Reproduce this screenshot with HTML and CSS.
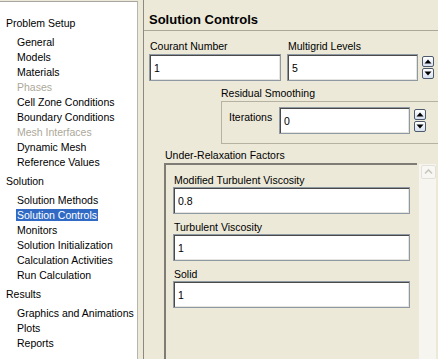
FILE: index.html
```html
<!DOCTYPE html>
<html>
<head>
<meta charset="utf-8">
<link rel="stylesheet" href="styles.css">
</head>
<body>
<div class="app">
  <nav class="nav">
    <div class="head">Problem Setup</div>
    <div class="item">General</div>
    <div class="item">Models</div>
    <div class="item">Materials</div>
    <div class="item off">Phases</div>
    <div class="item">Cell Zone Conditions</div>
    <div class="item">Boundary Conditions</div>
    <div class="item off">Mesh Interfaces</div>
    <div class="item">Dynamic Mesh</div>
    <div class="item">Reference Values</div>
    <div class="head">Solution</div>
    <div class="item">Solution Methods</div>
    <div class="item"><span class="sel">Solution Controls</span></div>
    <div class="item">Monitors</div>
    <div class="item">Solution Initialization</div>
    <div class="item">Calculation Activities</div>
    <div class="item">Run Calculation</div>
    <div class="head">Results</div>
    <div class="item">Graphics and Animations</div>
    <div class="item">Plots</div>
    <div class="item">Reports</div>
  </nav>
  <div class="splitter"></div>
  <main class="main">
    <div class="title">Solution Controls</div>
    <div class="toprow">
      <div class="field-group courant">
        <div class="label">Courant Number</div>
        <input class="field w132" type="text" value="1">
      </div>
      <div class="field-group multigrid">
        <div class="label">Multigrid Levels</div>
        <div class="spinrow">
          <input class="field w131" type="text" value="5">
          <div class="spinner">
            <div class="spin-btn"><svg width="12" height="11" viewBox="0 0 12 11"><path d="M2.5 7.5 L6 3.5 L9.5 7.5 Z" fill="#000"/></svg></div>
            <div class="spin-btn"><svg width="12" height="11" viewBox="0 0 12 11"><path d="M2.5 3.5 L6 7.5 L9.5 3.5 Z" fill="#000"/></svg></div>
          </div>
        </div>
      </div>
    </div>
    <div class="residual">
      <div class="group-label">Residual Smoothing</div>
      <div class="rbox">
        <div class="iter-label">Iterations</div>
        <input class="field w131" type="text" value="0">
        <div class="spinner">
          <div class="spin-btn"><svg width="12" height="11" viewBox="0 0 12 11"><path d="M2.5 7.5 L6 3.5 L9.5 7.5 Z" fill="#000"/></svg></div>
          <div class="spin-btn"><svg width="12" height="11" viewBox="0 0 12 11"><path d="M2.5 3.5 L6 7.5 L9.5 3.5 Z" fill="#000"/></svg></div>
        </div>
      </div>
    </div>
    <div class="urf-label">Under-Relaxation Factors</div>
    <div class="urf">
      <div class="viewport">
        <div class="vlabel">Modified Turbulent Viscosity</div>
        <input class="field w237" type="text" value="0.8">
        <div class="vlabel">Turbulent Viscosity</div>
        <input class="field w237" type="text" value="1">
        <div class="vlabel">Solid</div>
        <input class="field w237" type="text" value="1">
      </div>
      <div class="scrollbar">
        <div class="scroll-up"><svg width="13" height="12" viewBox="0 0 13 12"><path d="M3 7.5 L6.5 4 L10 7.5" fill="none" stroke="#c9c7bd" stroke-width="1.6"/></svg></div>
      </div>
    </div>
  </main>
</div>
</body>
</html>
```
FILE: styles.css
```css
html, body {
  margin: 0;
  padding: 0;
}
body {
  width: 438px;
  height: 359px;
  overflow: hidden;
  background: #ece9d8;
  font-family: "Liberation Sans", Arial, sans-serif;
  font-size: 10.5px;
  color: #000;
}
.app {
  display: flex;
  height: 359px;
}
.nav {
  width: 137px;
  flex: none;
  background: #fff;
  margin-top: 1px;
  border-top: 1px solid #a7a6a0;
  border-right: 1px solid #b8b6aa;
  padding-top: 10px;
  box-sizing: content-box;
}
.head {
  line-height: 23px;
  height: 23px;
  padding-left: 6px;
  white-space: nowrap;
}
.item {
  line-height: 15px;
  height: 15px;
  padding-left: 17px;
  white-space: nowrap;
}
.item.off {
  color: #aca899;
}
.sel {
  display: inline-block;
  background: #316ac5;
  color: #fff;
  line-height: 12px;
  padding: 0 1px;
  margin-left: -1px;
}
.splitter {
  width: 5px;
  flex: none;
  background: #ece9d8;
}
.main {
  flex: 1;
  border-left: 1px solid #8c8a80;
  overflow: hidden;
  display: flex;
  flex-direction: column;
}
.title {
  height: 31px;
  box-sizing: border-box;
  padding: 9px 0 0 5px;
  line-height: 21px;
  font-size: 13px;
  font-weight: bold;
  border-bottom: 1px solid #aca899;
  white-space: nowrap;
}
.toprow {
  display: flex;
  padding: 8px 0 0 5px;
  gap: 6px;
}
.label {
  line-height: 15px;
  padding-left: 1px;
  white-space: nowrap;
}
.field {
  display: block;
  box-sizing: border-box;
  height: 27px;
  margin: 0;
  padding: 0 0 0 4px;
  border: 1px solid #8e99a4;
  box-shadow: inset 1px 1px 0 #4a4a4a, inset -1px -1px 0 #e4e4e0;
  background: #fff;
  font-family: "Liberation Sans", Arial, sans-serif;
  font-size: 10.5px;
  color: #000;
  outline: none;
}
.w132 { width: 132px; }
.w131 { width: 131px; }
.w237 { width: 237px; }
.spinrow {
  display: flex;
  align-items: center;
}
.spinner {
  display: flex;
  flex-direction: column;
  gap: 1px;
  margin-left: 4px;
}
.spin-btn {
  width: 12px;
  height: 11px;
  box-sizing: border-box;
  border: 1px solid #4e5a6c;
  border-radius: 2px;
  background: linear-gradient(#ffffff, #d6e0ef);
  display: flex;
  align-items: center;
  justify-content: center;
}
.spin-btn svg {
  display: block;
  flex: none;
}
.residual {
  margin: 5px 0 0 77px;
}
.group-label {
  line-height: 15px;
  white-space: nowrap;
}
.rbox {
  display: flex;
  align-items: flex-start;
  border: 1px solid #b5b2a1;
  border-right: none;
  padding: 5px 0 9px 7px;
}
.iter-label {
  width: 50px;
  flex: none;
  padding-top: 3px;
  line-height: 15px;
}
.rbox .spinner {
  align-self: center;
}
.urf-label {
  margin: 4px 0 0 21px;
  line-height: 15px;
  white-space: nowrap;
}
.urf {
  flex: 1;
  display: flex;
  margin-left: 20px;
}
.viewport {
  width: 253px;
  flex: none;
  border-top: 2px solid #7e7c74;
  border-left: 2px solid #7e7c74;
  padding: 8px 0 0 7px;
  box-sizing: border-box;
}
.vlabel {
  line-height: 14px;
  padding-left: 1px;
  white-space: nowrap;
}
.viewport .field + .vlabel {
  margin-top: 6px;
}
.scrollbar {
  width: 17px;
  flex: none;
  margin-left: 2px;
  margin-top: 1px;
  background: #f6f5f0;
}
.scroll-up {
  width: 15px;
  height: 14px;
  margin: 1px 0 0 2px;
  box-sizing: border-box;
  border: 1px solid #e3e1d7;
  border-radius: 2px;
  background: #f8f7f3;
  display: flex;
  align-items: center;
  justify-content: center;
}
.scroll-up svg {
  display: block;
}
```
